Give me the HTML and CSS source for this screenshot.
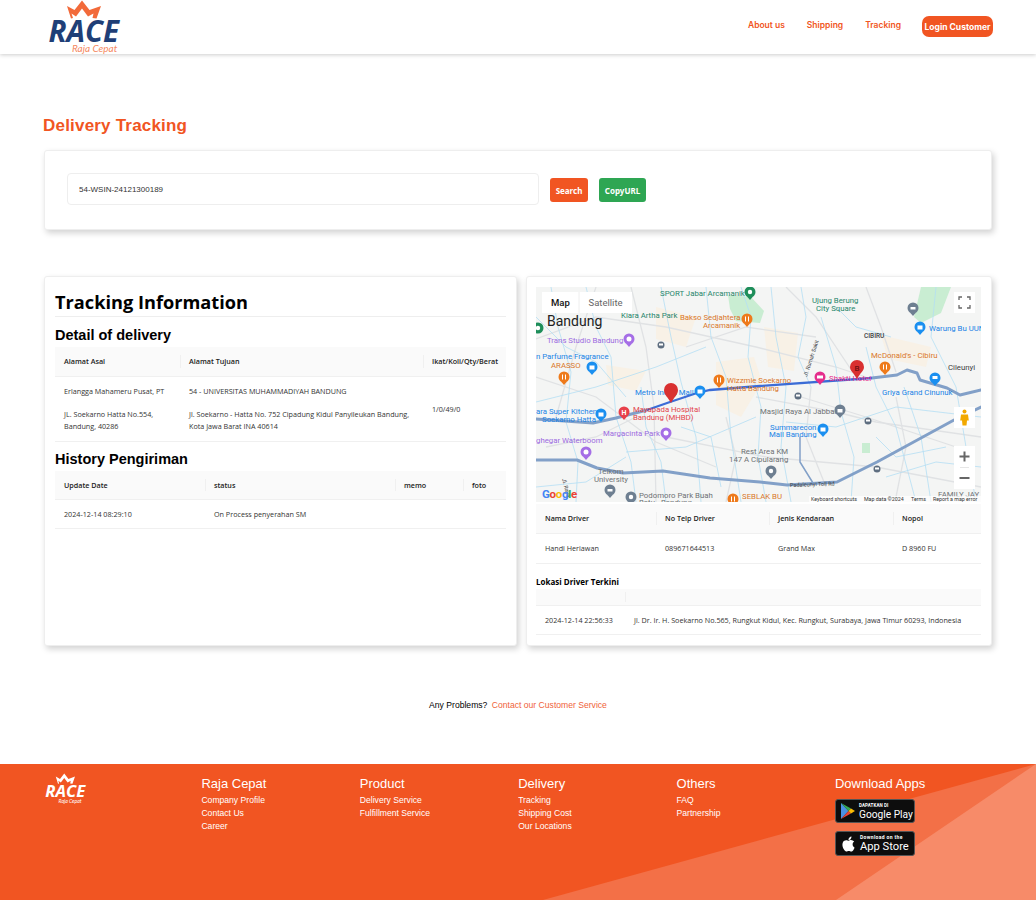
FILE: index.html
```html
<!DOCTYPE html>
<html lang="id">
<head>
<meta charset="utf-8">
<title>Delivery Tracking</title>
<link rel="stylesheet" href="styles.css">
</head>
<body>
<header class="topbar">
  <a class="brand" href="#">
    <svg class="logo" viewBox="0 0 76 54" width="76" height="54">
      <path class="crown" d="M19 6 L26.500 10 L34 0.500 L41.500 10 L53 6 L48.500 18.500 L44.500 18 L45.500 13.500 L40 16.500 L34 8.500 L28 16.500 L23.500 13.500 L25 18 L23 18.500 Z"/>
      <text class="logo-race" x="0.500" y="42">RACE</text>
      <text class="logo-sub" x="24" y="52">Raja Cepat</text>
    </svg>
  </a>
  <nav class="nav">
    <a href="#">About us</a>
    <a href="#">Shipping</a>
    <a href="#">Tracking</a>
    <button class="login">Login Customer</button>
  </nav>
</header>

<main class="page">
  <h1 class="title">Delivery Tracking</h1>
  <section class="card search">
    <input class="search-input" type="text" value="54-WSIN-24121300189">
    <button class="btn btn-orange">Search</button>
    <button class="btn btn-green">CopyURL</button>
  </section>

  <div class="columns">
    <section class="card info">
      <h2 class="info-title">Tracking Information</h2>
      <h3 class="sub">Detail of delivery</h3>
      <table class="tbl">
        <colgroup><col class="c125"><col class="c243"><col></colgroup>
        <thead><tr><th>Alamat Asal</th><th>Alamat Tujuan</th><th class="tight">Ikat/Koli/Qty/Berat</th></tr></thead>
        <tbody>
          <tr class="detail">
            <td><p>Erlangga Mahameru Pusat, PT</p><p>JL. Soekarno Hatta No.554, Bandung, 40286</p></td>
            <td><p>54 - UNIVERSITAS MUHAMMADIYAH BANDUNG</p><p>Jl. Soekarno - Hatta No. 752 Cipadung Kidul Panyileukan Bandung, Kota Jawa Barat INA 40614</p></td>
            <td class="tight">1/0/49/0</td>
          </tr>
        </tbody>
      </table>
      <h3 class="sub sub-history">History Pengiriman</h3>
      <table class="tbl">
        <colgroup><col class="c150"><col class="c190"><col class="c68"><col></colgroup>
        <thead><tr><th>Update Date</th><th>status</th><th>memo</th><th>foto</th></tr></thead>
        <tbody><tr><td>2024-12-14 08:29:10</td><td>On Process penyerahan SM</td><td></td><td></td></tr></tbody>
      </table>
    </section>

    <section class="card driver">
      <div class="map">
        <svg class="map-svg" viewBox="0 0 445 215" width="445" height="215">
          <defs>
            <g id="tail"><path d="M-2.500 5 L0 8 L2.500 5 Z"/></g>
          </defs>
          <rect width="445" height="215" fill="#f4f5f4"/>
          <g fill="#c9edd2">
            <path d="M192 8 L215 10 L228 24 L224 36 L200 34 L194 22 Z"/>
            <path d="M326 156 h8 v10 h-8 Z"/>
            <path d="M385 0 L415 0 L405 26 L385 36 L378 30 Z"/>
            <path d="M65 10 L80 8 L84 22 L70 26 Z"/>
          </g>
          <g fill="#f8f1e6">
            <path d="M180 75 L218 70 L226 95 L205 130 L180 118 Z"/>
            <path d="M228 40 L262 46 L258 84 L232 80 Z"/>
            <path d="M70 78 L110 84 L100 104 L72 98 Z"/>
            <path d="M345 48 L395 60 L390 80 L352 72 Z"/>
            <path d="M120 20 L160 30 L150 60 L120 52 Z"/>
          </g>
          <g fill="none" stroke="#e0e2e4" stroke-width="1.300">
            <path d="M0 52 L60 30 L130 40 L220 60 L300 80 L330 90"/>
            <path d="M95 0 L110 60 L118 120 L120 215"/>
            <path d="M0 90 L60 110 L120 155 L180 180"/>
            <path d="M250 0 L280 30 L300 60 L320 90"/>
            <path d="M262 109 L330 130 L420 160"/>
            <path d="M130 150 L230 170 L340 180 L445 200"/>
            <path d="M220 110 L300 125 L340 135 L445 150"/>
            <path d="M60 0 L40 60 L20 130"/>
            <path d="M330 0 L345 40 L360 85"/>
            <path d="M150 60 L210 40 L280 50"/>
            <path d="M10 160 L60 150 L100 130"/>
            <path d="M360 110 L370 160 L360 210"/>
            <path d="M275 100 L270 150 L290 200"/>
            <path d="M190 130 L200 170 L190 215"/>
          </g>
          <g fill="none" stroke="#b4def4" stroke-width=".8">
            <path d="M15 0 L22 40 L35 85 L30 135 L42 175 L40 215"/>
            <path d="M50 0 L60 40 L75 70 L80 130 L95 175 L100 215"/>
            <path d="M125 0 L135 50 L145 95 L160 150 L165 215"/>
            <path d="M170 0 L175 50 L190 90 L195 150 L205 215"/>
            <path d="M235 0 L240 50 L250 100 L245 160 L255 215"/>
            <path d="M285 30 L300 80 L305 125 L318 170 L315 215"/>
            <path d="M330 60 L340 100 L360 140 L380 215"/>
            <path d="M368 100 L385 150 L395 215"/>
            <path d="M400 0 L395 50 L420 100 L430 160 L440 215"/>
            <path d="M0 115 L60 100 L120 80 L170 60"/>
            <path d="M90 165 L150 160 L220 130"/>
            <path d="M250 135 L300 140 L360 120 L445 130"/>
            <path d="M350 190 L400 175 L445 180"/>
            <path d="M0 200 L50 195 L90 170"/>
            <path d="M205 0 L215 30 L212 70 L225 120 L222 170 L230 215"/>
            <path d="M265 0 L270 30 L262 70 L275 100"/>
            <path d="M105 100 L110 140 L125 175 L130 215"/>
            <path d="M0 30 L30 60 L60 75 L90 110"/>
            <path d="M145 140 L175 150 L185 200"/>
            <path d="M300 20 L320 40 L355 50"/>
            <path d="M340 150 L360 170 L410 160"/>
          </g>
          <g fill="none" stroke="#82a0c8" stroke-linejoin="round" stroke-linecap="round">
            <path stroke-width="3" d="M0 173 L41 173 L61 181 L87 186 L127 184 L174 191 L224 195 L251 198 L301 195 L341 175 L418 133 L445 120"/>
            <path stroke-width="3" d="M0 132 L57 136 L80 131 L111 123"/>
            <path stroke-width="3" d="M336 91 L361 88 L371 83 L381 86 L384 93 L411 101 L424 108 L445 103"/>
            <path stroke-width="1.500" d="M264 150 L264 175 L277 196"/>
          </g>
          <path d="M111 123 L134 115 L161 106 L174 103 L224 99 L336 91" fill="none" stroke="#3b6cd6" stroke-width="2.300"/>

          <g class="mt">
            <text class="m-teal" x="124" y="9">SPORT Jabar Arcamanik</text>
            <text class="m-teal" x="85" y="31">Kiara Artha Park</text>
            <text class="m-teal" x="276" y="16">Ujung Berung</text>
            <text class="m-teal" x="280" y="23.500">City Square</text>
            <text class="m-orange" x="144" y="33">Bakso Sedjahtera</text>
            <text class="m-orange" x="167" y="40.500">Arcamanik</text>
            <text class="m-purple" x="11" y="56">Trans Studio Bandung</text>
            <text class="m-blue" x="0" y="72">n Parfume Fragrance</text>
            <text class="m-orange" x="15" y="81">ARASSO</text>
            <text class="m-blue" x="99" y="108">Metro Indah Mall</text>
            <text class="m-orange" x="191" y="96">Wizzmie Soekarno</text>
            <text class="m-orange" x="191" y="104">Hatta Bandung</text>
            <text class="m-red" x="97" y="125">Mayapada Hospital</text>
            <text class="m-red" x="97" y="132.500">Bandung (MHBD)</text>
            <text class="m-blue" x="0" y="127">ara Super Kitchen</text>
            <text class="m-blue" x="6" y="135">Soekarno Hatta</text>
            <text class="m-purple" x="67" y="149">Margacinta Park</text>
            <text class="m-purple" x="0" y="156">ghegar Waterboom</text>
            <text class="m-gray" x="205" y="167">Rest Area KM</text>
            <text class="m-gray" x="193" y="174.500">147 A Cipularang</text>
            <text class="m-gray" x="62" y="187">Telkom</text>
            <text class="m-gray" x="58" y="194.500">University</text>
            <text class="m-gray" x="103" y="211">Podomoro Park Buah</text>
            <text class="m-gray" x="103" y="218">Batu - Bandung</text>
            <text class="m-orange" x="206" y="212">SEBLAK BU</text>
            <text class="m-blue" x="393" y="44">Warung Bu UUN</text>
            <text class="m-dark m-small" x="328" y="51">CIBIRU</text>
            <text class="m-orange" x="335" y="71">McDonald's - Cibiru</text>
            <text class="m-dark" x="412" y="83">Cileunyi</text>
            <text class="m-pink" x="293" y="94">Shakti Hotel</text>
            <text class="m-blue" x="346" y="108">Griya Grand Cinunuk</text>
            <text class="m-gray" x="224" y="127">Masjid Raya Al Jabbar</text>
            <text class="m-blue" x="234" y="143">Summarecon</text>
            <text class="m-blue" x="233" y="150">Mall Bandung</text>
            <text class="m-gray" x="402" y="210">FAMILY JAY</text>
            <text class="m-dark m-tiny" transform="translate(271 90) rotate(-72)">Jl. Rumah Sakit</text>
            <text class="m-dark m-tiny" transform="translate(254 200) rotate(-2)">Padaleunyi Toll Rd</text>
            <text class="m-dark m-tiny" transform="translate(26 192) rotate(75)">Jl. Raya</text>
            <text class="m-city" x="11" y="39">Bandung</text>
          </g>

          <g class="pins">
            <g transform="translate(214 5)" fill="#1e8e5a"><circle r="5.500"/><use href="#tail"/><circle r="2.200" fill="#fff"/></g>
            <g transform="translate(2 41)" fill="#1e8e5a"><circle r="5.500"/><circle r="2.200" fill="#fff"/></g>
            <g fill="#ee7a1b">
              <g transform="translate(211 32)"><circle r="5.500"/><use href="#tail"/><path d="M-1.500 -2.500 v5 M1.500 -2.500 v5" stroke="#fff"/></g>
              <g transform="translate(28 90)"><circle r="5.500"/><use href="#tail"/><path d="M-1.500 -2.500 v5 M1.500 -2.500 v5" stroke="#fff"/></g>
              <g transform="translate(183 93)"><circle r="5.500"/><use href="#tail"/><path d="M-1.500 -2.500 v5 M1.500 -2.500 v5" stroke="#fff"/></g>
              <g transform="translate(349 80)"><circle r="5.500"/><use href="#tail"/><path d="M-1.500 -2.500 v5 M1.500 -2.500 v5" stroke="#fff"/></g>
              <g transform="translate(197 212)"><circle r="5.500"/><path d="M-1.500 -2.500 v5 M1.500 -2.500 v5" stroke="#fff"/></g>
            </g>
            <g fill="#a56ee6">
              <g transform="translate(93 52)"><circle r="5.500"/><use href="#tail"/><circle r="2.500" fill="#fff"/></g>
              <g transform="translate(130 146)"><circle r="5.500"/><use href="#tail"/><circle r="2.500" fill="#fff"/></g>
              <g transform="translate(50 165)"><circle r="5.500"/><use href="#tail"/><circle r="2.500" fill="#fff"/></g>
            </g>
            <g fill="#1a8ff0">
              <g transform="translate(56 80)"><circle r="5.500"/><use href="#tail"/><rect x="-2.500" y="-1.500" width="5" height="4" fill="#fff"/></g>
              <g transform="translate(164 104)"><circle r="5.500"/><use href="#tail"/><rect x="-2.500" y="-1.500" width="5" height="4" fill="#fff"/></g>
              <g transform="translate(65 127)"><circle r="5.500"/><use href="#tail"/><rect x="-2.500" y="-1.500" width="5" height="4" fill="#fff"/></g>
              <g transform="translate(384 40)"><circle r="5.500"/><use href="#tail"/><rect x="-2.500" y="-1.500" width="5" height="4" fill="#fff"/></g>
              <g transform="translate(399 91)"><circle r="5.500"/><use href="#tail"/><rect x="-2.500" y="-2" width="5" height="3" fill="#fff"/></g>
              <g transform="translate(287 142)"><circle r="5.500"/><use href="#tail"/><rect x="-2.500" y="-1.500" width="5" height="4" fill="#fff"/></g>
            </g>
            <g fill="#6e7f91">
              <g transform="translate(304 123)"><circle r="5.500"/><use href="#tail"/><rect x="-2.500" y="-1" width="5" height="3.500" fill="#fff"/></g>
              <g transform="translate(377 21)"><circle r="5.500"/><use href="#tail"/><rect x="-2.500" y="-1" width="5" height="2.500" fill="#fff"/></g>
              <g transform="translate(74 203)"><circle r="5.500"/><use href="#tail"/><rect x="-2.500" y="-1" width="5" height="2.500" fill="#fff"/></g>
              <g transform="translate(95 210)"><circle r="5.500"/><circle r="2.200" fill="#fff"/></g>
              <g transform="translate(235 184)"><circle r="5.500"/><use href="#tail"/><circle r="2.200" fill="#fff"/></g>
            </g>
            <g fill="#5e6e80">
              <g transform="translate(125 58)"><circle r="3.500"/><rect x="-2" y="-1.500" width="4" height="2" fill="#fff"/></g>
              <g transform="translate(262 109)"><circle r="3.500"/><rect x="-2" y="-1.500" width="4" height="2" fill="#fff"/></g>
              <g transform="translate(332 134)"><circle r="3.500"/><rect x="-2" y="-1.500" width="4" height="2" fill="#fff"/></g>
              <g transform="translate(341 182)"><circle r="3.500"/><rect x="-2" y="-1.500" width="4" height="2" fill="#fff"/></g>
            </g>
            <g transform="translate(88 125)" fill="#e8404a"><circle r="5.500"/><use href="#tail"/><text class="m-pinletter" text-anchor="middle" y="2.500">H</text></g>
            <g transform="translate(284 90)" fill="#e52e8c"><circle r="5.500"/><use href="#tail"/><rect x="-3" y="-1.500" width="6" height="3" fill="#fff"/></g>
            <path d="M135 116 C132 110 128 108 128 103 A7 7 0 0 1 142 103 C142 108 138 110 135 116 Z" fill="#d93030"/>
            <path d="M321 92 C318 86 314 84 314 80 A7 7 0 0 1 328 80 C328 84 324 86 321 92 Z" fill="#d93030"/>
            <text class="m-pinb" x="321" y="84" text-anchor="middle">B</text>
          </g>

          <text class="m-google" x="6" y="211"><tspan fill="#4285f4">G</tspan><tspan fill="#ea4335">o</tspan><tspan fill="#fbbc05">o</tspan><tspan fill="#4285f4">g</tspan><tspan fill="#34a853">l</tspan><tspan fill="#ea4335">e</tspan></text>
          <rect x="273" y="209" width="172" height="6" fill="#fff" fill-opacity=".7"/>
          <g class="m-attr">
            <text x="275" y="214">Keyboard shortcuts</text>
            <text x="328" y="214">Map data ©2024</text>
            <text x="375" y="214">Terms</text>
            <text x="397" y="214">Report a map error</text>
          </g>

          <rect x="6" y="5" width="90" height="21" fill="#fff"/>
          <path d="M43 5 v21" stroke="#eee"/>
          <text class="m-tab m-tab-on" x="15" y="19">Map</text>
          <text class="m-tab" x="52.500" y="19">Satellite</text>

          <rect x="418" y="5" width="21" height="21" fill="#fff"/>
          <path d="M423 13 v-3 h3 M431 10 h3 v3 M434 18 v3 h-3 M426 21 h-3 v-3" fill="none" stroke="#666" stroke-width="1.300"/>
          <rect x="418" y="120" width="21" height="21" fill="#fff"/>
          <g fill="#f2a900">
            <circle cx="428.500" cy="124.500" r="2"/>
            <path d="M425 127.500 h7 l.8 6 h-1.800 l-.5 5 h-4 l-.5 -5 h-1.800 Z"/>
          </g>
          <rect x="418" y="159" width="21" height="43" fill="#fff"/>
          <path d="M424 180.500 h9" stroke="#e6e6e6"/>
          <path d="M423.500 169.500 h10 M428.500 164.500 v10 M423.500 191 h10" stroke="#666" stroke-width="2"/>
        </svg>
      </div>
      <table class="tbl tbl-driver">
        <colgroup><col class="c120"><col class="c113"><col class="c124"><col></colgroup>
        <thead><tr><th>Nama Driver</th><th>No Telp Driver</th><th>Jenis Kendaraan</th><th>Nopol</th></tr></thead>
        <tbody><tr><td>Handi Heriawan</td><td>089671644513</td><td>Grand Max</td><td>D 8960 FU</td></tr></tbody>
      </table>
      <h4 class="loc">Lokasi Driver Terkini</h4>
      <table class="tbl tbl-loc">
        <colgroup><col class="c89"><col></colgroup>
        <thead><tr><th></th><th></th></tr></thead>
        <tbody><tr><td>2024-12-14 22:56:33</td><td>Jl. Dr. Ir. H. Soekarno No.565, Rungkut Kidul, Kec. Rungkut, Surabaya, Jawa Timur 60293, Indonesia</td></tr></tbody>
      </table>
    </section>
  </div>

  <p class="problems">Any Problems? <a href="#">Contact our Customer Service</a></p>
</main>

<footer class="footer">
  <div class="wedge wedge-a"></div>
  <div class="wedge wedge-b"></div>
  <div class="foot-grid">
    <div class="foot-logo">
      <svg class="logo-small" viewBox="0 0 76 54" width="43" height="31">
        <path class="crown-w" d="M19 6 L26.500 10 L34 0.500 L41.500 10 L53 6 L48.500 18.500 L44.500 18 L45.500 13.500 L40 16.500 L34 8.500 L28 16.500 L23.500 13.500 L25 18 L23 18.500 Z"/>
        <text class="logo-race-w" x="0.500" y="42">RACE</text>
        <text class="logo-sub-w" x="24" y="52">Raja Cepat</text>
      </svg>
    </div>
    <div class="foot-col"><h5>Raja Cepat</h5><a href="#">Company Profile</a><a href="#">Contact Us</a><a href="#">Career</a></div>
    <div class="foot-col"><h5>Product</h5><a href="#">Delivery Service</a><a href="#">Fulfillment Service</a></div>
    <div class="foot-col"><h5>Delivery</h5><a href="#">Tracking</a><a href="#">Shipping Cost</a><a href="#">Our Locations</a></div>
    <div class="foot-col"><h5>Others</h5><a href="#">FAQ</a><a href="#">Partnership</a></div>
    <div class="foot-col">
      <h5>Download Apps</h5>
      <div class="badges">
        <a class="badge" href="#">
          <svg class="gp" viewBox="0 0 14 16" width="14" height="16">
            <path d="M0 0 L7.500 8 L0 16 Z" fill="#4a90e2"/>
            <path d="M0 0 L10 5.500 L7.500 8 Z" fill="#34a853"/>
            <path d="M0 16 L10 10.500 L7.500 8 Z" fill="#ea4335"/>
            <path d="M10 5.500 L14 8 L10 10.500 L7.500 8 Z" fill="#fbbc05"/>
          </svg>
          <span class="badge-text"><span class="b-small">DAPATKAN DI</span><span class="b-big">Google Play</span></span>
        </a>
        <a class="badge badge-tall" href="#">
          <svg class="apple" viewBox="0 0 24 24" width="15" height="16"><path fill="#fff" d="M12.152 6.896c-.948 0-2.415-1.078-3.96-1.04-2.04.027-3.91 1.183-4.961 3.014-2.117 3.675-.546 9.103 1.519 12.09 1.013 1.454 2.208 3.09 3.792 3.039 1.52-.065 2.09-.987 3.935-.987 1.831 0 2.35.987 3.96.948 1.637-.026 2.676-1.48 3.676-2.948 1.156-1.688 1.636-3.325 1.662-3.415-.039-.013-3.182-1.221-3.22-4.857-.026-3.04 2.48-4.494 2.597-4.559-1.429-2.09-3.623-2.324-4.39-2.376-2-.156-3.675 1.09-4.61 1.09zM15.53 3.83c.843-1.012 1.4-2.427 1.245-3.83-1.207.052-2.662.805-3.532 1.818-.78.896-1.454 2.338-1.273 3.714 1.338.104 2.715-.688 3.559-1.701"/></svg>
          <span class="badge-text"><span class="b-small b-wide">Download on the</span><span class="b-big b-store">App Store</span></span>
        </a>
      </div>
    </div>
  </div>
</footer>
</body>
</html>
```

FILE: styles.css
```css
* { box-sizing: border-box; }
html, body { margin: 0; padding: 0; }
body {
  background: #fff;
  color: #000;
  font-family: "Liberation Sans", Arial, sans-serif;
  width: 1036px;
  height: 900px;
  overflow: hidden;
}
a { text-decoration: none; color: inherit; }

/* header */
.topbar {
  height: 54px;
  background: #fff;
  box-shadow: 0 1px 4px rgba(0, 0, 0, .2);
  display: flex;
  justify-content: space-between;
  align-items: flex-start;
  padding: 0 43px 0 48px;
  position: relative;
}
.brand { display: block; height: 54px; }
.logo { display: block; }
.crown { fill: #f26a3a; }
.logo-race { font: italic 700 29.500px "Open Sans", sans-serif; fill: #1f3f77; }
.logo-sub { font: italic 400 10px "Lato", sans-serif; fill: #f58a62; }
.nav {
  display: flex;
  align-items: flex-start;
  gap: 22px;
  padding-top: 16px;
  font: 600 8.500px "Inter", sans-serif;
  color: #f15522;
}
.nav a { margin-top: 3px; line-height: 12px; }
.login {
  width: 71px;
  height: 21px;
  margin-left: -1px;
  border: 0;
  border-radius: 7px;
  background: #f15522;
  color: #fff;
  font: 700 8.500px "Inter", sans-serif;
  padding: 0;
}

/* page */
.page { padding: 0 44px; }
.title {
  margin: 0 0 14px -1px;
  padding-top: 61px;
  font-size: 17px;
  line-height: 21px;
  font-weight: 700;
  letter-spacing: .2px;
  color: #f15522;
}
.card {
  background: #fff;
  border-radius: 3px;
  border: 1px solid #eee;
  box-shadow: 2px 3px 6px rgba(0, 0, 0, .18);
}
.search {
  height: 80px;
  padding: 0 22px;
  display: flex;
  align-items: center;
  gap: 11px;
}
.search-input {
  width: 472px;
  height: 32px;
  padding: 0 11px;
  border: 1px solid #eee;
  border-radius: 4px;
  color: #333;
  font: 8px "Liberation Sans", sans-serif;
  outline: 0;
  position: relative;
  top: -1px;
}
.btn {
  height: 24px;
  border: 0;
  border-radius: 3px;
  color: #fff;
  padding: 0;
  font: 700 8px "Noto Sans", sans-serif;
}
.btn-orange { width: 38px; background: #f15522; }
.btn-green { width: 47px; background: #2ea653; }

.columns {
  display: grid;
  grid-template-columns: 473px 466px;
  gap: 9px;
  margin-top: 46px;
}
.info, .driver { height: 370px; }
.info { padding: 10px 10px; }
.driver { padding: 10px 10px 10px 9px; }
.info-title {
  margin: 0;
  height: 30px;
  font: 700 18.200px/30px "Open Sans", sans-serif;
  border-bottom: 1px solid #eee;
}
.sub {
  margin: 9px 0 0;
  font-size: 14.500px;
  line-height: 18px;
  font-weight: 700;
  height: 21px;
}
.sub-history { margin-top: 8px; }

/* tables */
.tbl {
  width: 100%;
  table-layout: fixed;
  border-collapse: collapse;
  font: 7.200px/12px "Open Sans", sans-serif;
  color: #333;
}
.tbl th {
  height: 29px;
  padding: 0 9px;
  background: #fafafa;
  border-bottom: 1px solid #f0f0f0;
  color: #222;
  text-align: left;
  font-weight: 600;
  position: relative;
}
.tbl th + th::before {
  content: "";
  position: absolute;
  left: 0;
  top: 8px;
  bottom: 8px;
  width: 1px;
  background: #f0f0f0;
}
.tbl td {
  height: 29px;
  padding: 0 9px;
  border-bottom: 1px solid #f0f0f0;
}
.tbl p { margin: 0 0 11px; }
.tbl p:last-child { margin: 0; }
.tbl .detail td { padding-top: 8px; padding-bottom: 9px; height: 64px; }
.tbl .detail td.tight { padding-top: 0; padding-bottom: 0; }
.tbl .tight { padding-left: 9px; padding-right: 0; white-space: nowrap; }
.c125 { width: 125px; }
.c243 { width: 243px; }
.c150 { width: 150px; }
.c190 { width: 190px; }
.c68 { width: 68px; }
.c120 { width: 120px; }
.c113 { width: 113px; }
.c124 { width: 124px; }
.c89 { width: 89px; }

.map { height: 215px; overflow: hidden; }
.map-svg { display: block; }
.tbl-driver { margin-top: 2px; }
.tbl-driver td { height: 30px; }
.loc {
  margin: 12px 0 0;
  height: 13px;
  font: 700 8px/12px "Open Sans", sans-serif;
}
.tbl-loc th { height: 17px; }
.tbl-loc th + th::before { top: 3px; bottom: 3px; }
.tbl-loc td { height: 29px; white-space: nowrap; }

/* map labels */
.mt text { font: 400 7.800px "Roboto", sans-serif; }
.mt .m-teal { fill: #26856b; }
.mt .m-orange { fill: #d9772b; }
.mt .m-purple { fill: #9c6ae0; }
.mt .m-blue { fill: #1a83e6; }
.mt .m-red { fill: #e2434b; }
.mt .m-pink { fill: #e52e8c; }
.mt .m-gray { fill: #6f7275; }
.mt .m-dark { fill: #3c4043; }
.mt .m-small { font-size: 6.500px; font-weight: 500; }
.mt .m-tiny { font-size: 5.500px; }
.mt .m-city { font-size: 14px; fill: #222; }
.m-pinletter { font: 700 7px "Roboto", sans-serif; fill: #fff; }
.m-pinb { font: 500 8px "Roboto", sans-serif; fill: #6b1111; }
.m-google { font: 700 11.500px "Roboto", sans-serif; letter-spacing: -.3px; }
.m-attr text { font: 400 5.300px "Roboto", sans-serif; fill: #333; }
.m-tab { font: 400 9.500px "Roboto", sans-serif; fill: #666; }
.m-tab-on { font-weight: 500; fill: #111; }

/* problems */
.problems {
  margin: 52px 0 0;
  height: 14px;
  text-align: center;
  font-size: 8.600px;
  line-height: 14px;
}
.problems a { color: #f0623a; margin-left: 2px; }

/* footer */
.footer {
  position: absolute;
  left: 0;
  top: 764px;
  width: 1036px;
  height: 136px;
  background: #f15522;
  overflow: hidden;
  color: #fff;
}
.wedge { position: absolute; inset: 0; }
.wedge-a { background: #f37047; clip-path: polygon(543px 136px, 1036px 0, 1036px 136px); }
.wedge-b { background: #f78b69; clip-path: polygon(836px 136px, 1036px 0, 1036px 136px); }
.foot-grid {
  position: relative;
  display: grid;
  grid-template-columns: repeat(6, 158.400px);
  padding: 12px 0 0 43px;
}
.foot-logo { padding-left: 2px; margin-top: -3px; }
.logo-small { display: block; }
.crown-w { fill: #fff; }
.logo-race-w { font: italic 700 29.500px "Open Sans", sans-serif; fill: #fff; }
.logo-sub-w { font: italic 400 9px "Lato", sans-serif; fill: #fff; }
.foot-col h5 {
  margin: 0 0 2px;
  font-size: 13px;
  line-height: 16px;
  font-weight: 400;
}
.foot-col a { display: block; font-size: 8.600px; line-height: 13px; }
.badges { display: flex; flex-direction: column; gap: 8px; margin-top: 7px; }
.foot-col .badge {
  width: 80px;
  height: 24px;
  background: #0d0d0d;
  border: 1px solid #555;
  border-radius: 3px;
  display: flex;
  align-items: center;
  gap: 4px;
  padding-left: 5px;
  line-height: 1;
}
.foot-col .badge-tall { height: 25px; }
.gp, .apple { flex: none; }
.badge-text { display: flex; flex-direction: column; gap: 1px; white-space: nowrap; }
.b-small { font: 700 4.500px/5px "Roboto", sans-serif; letter-spacing: .1px; }
.b-wide { font-size: 5px; letter-spacing: .35px; }
.b-big { font: 400 10.200px/11px "Roboto", sans-serif; }
.b-store { font-size: 11.200px; line-height: 12px; }
```
